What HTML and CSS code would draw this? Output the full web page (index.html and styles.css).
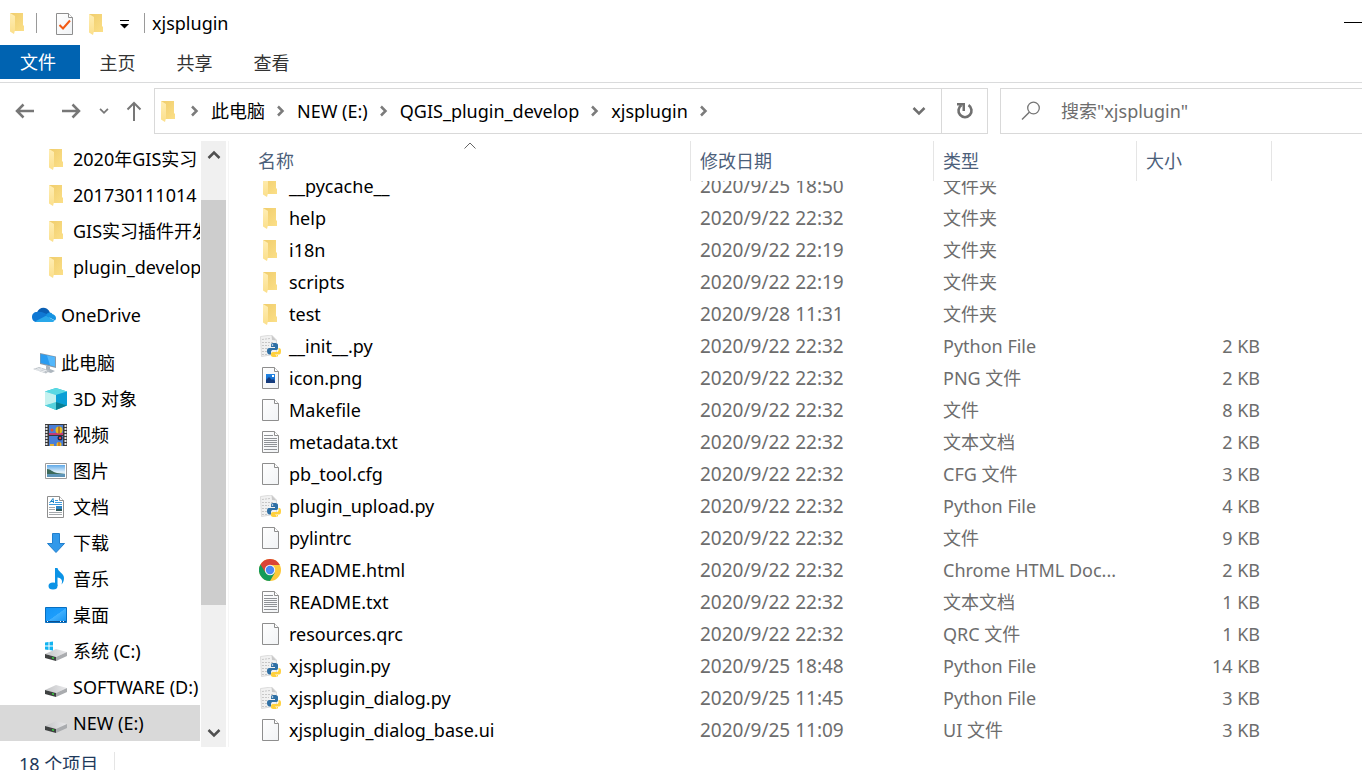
FILE: index.html
```html
<!DOCTYPE html>
<html lang="zh-CN">
<head>
<meta charset="utf-8">
<title>xjsplugin</title>
<link rel="stylesheet" href="styles.css">
</head>
<body>
<svg class="defs" aria-hidden="true">
  <defs>
    <linearGradient id="g-folder" x1="0" x2="1" y1="0" y2="1"><stop offset="0" stop-color="#f0cd6c"/><stop offset="1" stop-color="#fbdf88"/></linearGradient>
    <linearGradient id="g-flap" x1="0" x2="0" y1="0" y2="1"><stop offset="0" stop-color="#ffeeb5"/><stop offset="1" stop-color="#fbdf8b"/></linearGradient>
    <linearGradient id="g-page" x1="0" x2="1" y1="0" y2="1"><stop offset="0" stop-color="#ffffff"/><stop offset="1" stop-color="#f1f3f5"/></linearGradient>
    <linearGradient id="g-screen" x1="0" x2="1" y1="0" y2="1"><stop offset="0" stop-color="#1595f5"/><stop offset="0.5" stop-color="#1c9dfc"/><stop offset="0.52" stop-color="#3fb0ff"/><stop offset="1" stop-color="#1492f0"/></linearGradient>
    <linearGradient id="g-drive" x1="0" x2="1"><stop offset="0" stop-color="#c4c5c7"/><stop offset="1" stop-color="#e9e9eb"/></linearGradient>
    <linearGradient id="g-img" x1="0" x2="0" y1="0" y2="1"><stop offset="0" stop-color="#2486e4"/><stop offset="1" stop-color="#0d5fc0"/></linearGradient>
    <linearGradient id="g-sky" x1="0" x2="0" y1="0" y2="1"><stop offset="0" stop-color="#5fa9e8"/><stop offset="0.6" stop-color="#e6f3fb"/><stop offset="1" stop-color="#8bb9d6"/></linearGradient>
  </defs>
  <symbol id="i-folder" viewBox="0 0 22 22">
    <path d="M4 1h13v12l1 1v5H8z" fill="url(#g-folder)"/>
    <path d="M4 1l5 3v14l-1 4-4-2.500z" fill="url(#g-flap)"/>
  </symbol>
  <symbol id="i-page" viewBox="0 0 22 22">
    <path d="M3.500.500h12l4 4v17h-16z" fill="url(#g-page)" stroke="#8e8e8e"/>
    <path d="M15.500.500v4h4" fill="#fff" stroke="#8e8e8e"/>
  </symbol>
  <symbol id="i-text" viewBox="0 0 22 22">
    <use href="#i-page"/>
    <path d="M5 4.500h9M5 7.500h13M5 9.500h13M5 11.500h13M5 13.500h13M5 15.500h13M5 18.500h13" stroke="#8f9296"/>
  </symbol>
  <symbol id="i-png" viewBox="0 0 22 22">
    <use href="#i-page"/>
    <path d="M7 7h9v9H7z" fill="url(#g-img)"/>
    <path d="M7 16v-3l3-3 3 3 1-1 2 2v2z" fill="#153b7c"/>
    <path d="M13 8h2v2h-2z" fill="#fff"/>
  </symbol>
  <symbol id="i-check" viewBox="0 0 22 22">
    <use href="#i-page"/>
    <path d="M6.500 12l3.500 3.500 7-8" fill="none" stroke="#f25a13" stroke-width="2"/>
  </symbol>
  <symbol id="i-py" viewBox="0 0 22 22">
    <path d="M1.500 1.500l11-1.500 5 5v14l-15 2.500z" fill="#f1f1f1" stroke="#dcdcdc"/>
    <path d="M12.500 0l.5 5 4.500.500z" fill="#c9c9c9"/>
    <path d="M3 4.500l8-1M3 7.500h11M3 10.500h7M3 13.500h6M3 16.500h5M3 19.500h6" stroke="#c8c8c8" stroke-dasharray="2 1"/>
    <path d="M15 8c-3 0-3 1-3 2v2h4v1h-5.500C8.500 13 8 14 8 16s1 3.500 2.500 3.500H12V17c0-1.500 1-2 2-2h3.500c1 0 1.500-1 1.500-2v-3c0-1.500-1.500-2-4-2z" fill="#2f70a5"/>
    <path d="M19.500 13v2c0 1.500-1 2-2 2H14c-1.500 0-2 1-2 2v1.500c0 1 1.500 1.500 4 1.500 2 0 3-.5 3-1.500V20h-3v-.500h4c1.500 0 2-1 2-3.500 0-2-.5-3-2.500-3z" fill="#ffd13d"/>
    <circle cx="13.500" cy="10" r=".8" fill="#fff"/><circle cx="17.500" cy="20.800" r=".6" fill="#fff"/>
  </symbol>
  <symbol id="i-chrome" viewBox="0 0 22 22">
    <circle cx="11" cy="11" r="11" fill="#fdc93a"/>
    <path d="M11 11L1.470 5.500A11 11 0 0 0 11 22l4.800-8.200z" fill="#149b59"/>
    <path d="M11 11v-5h9.800A11 11 0 0 0 1.470 5.500L6.500 13.500z" fill="#db4437"/>
    <circle cx="11" cy="11" r="5.200" fill="#f4f4f4"/>
    <circle cx="11" cy="11" r="4.200" fill="#4a86f4"/>
  </symbol>
  <symbol id="i-cloud" viewBox="0 0 24 22">
    <path d="M5 8.500C7 3 14.500 1.500 18 8.500l-5 4z" fill="#0a5fb4"/>
    <path d="M5 8c-3 0-5 2-5 5s2 5 5 5h10l3-6C13 9 9 7 5 8z" fill="#0f78d4"/>
    <path d="M14 11c2-3.500 6-3 6.500-.5L17 14z" fill="#1490df"/>
    <path d="M3 17.500L14 11.800l8.500 4.700c-.5 1-1.500 1.500-3 1.500H5z" fill="#29a8ea"/>
    <path d="M14 11.500c1.500-2 3.500-2 5-1.500 3 0 5 2 5 4 0 1-.5 2-1 2.500z" fill="#1593e2"/>
  </symbol>
  <symbol id="i-pc" viewBox="0 0 24 22">
    <path d="M8 1l16 3.500v11.500L8 12z" fill="#8c99a5"/><path d="M8.500 2L23 5v9.500L8.500 11z" fill="#2b9cf0"/>
    <path d="M15 3.400L23 5v9.500l-5-1.200z" fill="#53b7fb"/>
    <path d="M14 13.500l4 1v2.500l5 2-4 2-5-1.500z" fill="#adb6be"/>
    <path d="M1 17l6-2 11 3.500-4 3z" fill="#bcc2c8"/><path d="M3 17l10 3M5 16l10 3M5 18.500l5-2M9 20l5-2" stroke="#eef0f2" stroke-width=".8"/>
  </symbol>
  <symbol id="i-cube" viewBox="0 0 22 22">
    <path d="M0 3.500L11 0l11 3.500v14L11 22 0 17.500z" fill="#27c0d3"/>
    <path d="M0 3.500L11 0l11 3.500L11 7z" fill="#5ad9e3"/><path d="M0 3.500L11 7v8L0 17.500z" fill="#c5f2f0"/>
    <path d="M11 7l11-3.500v14L11 14z" fill="#0b9fd6"/><path d="M0 17.500L11 14v8z" fill="#55d1dc"/><path d="M11 14l11 3.500L11 22z" fill="#087f95"/>
  </symbol>
  <symbol id="i-video" viewBox="0 0 22 22">
    <path d="M0 0h22v22H0z" fill="#39393b"/><path d="M4 1h14v10H4zM4 12h14v10H4z" fill="#4a7fd6"/>
    <path d="M1.500 1v21M20.500 1v21" stroke="#e3e3e3" stroke-width="2" stroke-dasharray="2 1"/>
    <path d="M4 9h6l3-1 5 1v2H4z" fill="#c43b73"/><circle cx="14" cy="6" r="3.500" fill="#e5b91f"/><path d="M14 2.500v7" stroke="#8e3b1c"/>
    <circle cx="7" cy="6" r="1.500" fill="#e05230"/><circle cx="15" cy="14" r="2.500" fill="#242748"/><path d="M14 13h2v2h-2z" fill="#df3e38"/>
    <circle cx="14" cy="20.500" r="2.500" fill="#edba24"/><path d="M14 18v4" stroke="#b84c23"/><path d="M5 20h4v2H5z" fill="#e4b136"/>
  </symbol>
  <symbol id="i-picture" viewBox="0 0 22 22">
    <path d="M.5 3.500h21v15H.5z" fill="#fff" stroke="#9b9b9b"/><path d="M2 5h18v12H2z" fill="url(#g-sky)"/>
    <path d="M2 9c4 0 5 3 10 4l8 1H2z" fill="#3c6a5b"/><path d="M2 14h18v3H2z" fill="#5e95b8"/>
  </symbol>
  <symbol id="i-doc" viewBox="0 0 22 22">
    <path d="M2.500.500h12l4 4v17h-16z" fill="#fff" stroke="#8e8e8e"/><path d="M14.500.500v4h4" fill="#fff" stroke="#8e8e8e"/>
    <path d="M4.500 7L8 2.500 8.500 7M6 5.500h3" fill="none" stroke="#1580c4"/><path d="M10 4.500h3M10 6.500h7M4 8.500h13" stroke="#3c9ade"/>
    <path d="M4 11.500h6M4 13.500h6M4 16.500h13M4 18.500h13" stroke="#a5a9ad"/><path d="M11 10h6v5h-6z" fill="#2f84c2"/><path d="M11 13h6v2h-6z" fill="#315a5b"/>
  </symbol>
  <symbol id="i-down" viewBox="0 0 22 22"><path d="M7.500 1.500h7v10h5L11 20.500 2.500 11.500h5z" fill="#3399ea" stroke="#2280ce"/></symbol>
  <symbol id="i-music" viewBox="0 0 22 22">
    <ellipse cx="8" cy="18" rx="4.500" ry="3.500" fill="#0b93e6"/>
    <path d="M10 0h2.500c.5 4 6.500 5 6.500 10 0 3-1 5-2.500 6.500 1.500-4 0-6.500-4-7V18H10z" fill="#0b93e6"/>
  </symbol>
  <symbol id="i-desktop" viewBox="0 0 22 22">
    <path d="M.5 3.500h21v15H.5z" fill="url(#g-screen)" stroke="#086fc0"/><path d="M1 17.500h20" stroke="#0c4f8e"/><path d="M2 17.500h1M15 17.500h1M18 17.500h1" stroke="#fff"/>
  </symbol>
  <symbol id="i-drive" viewBox="0 0 22 22">
    <path d="M0 14l11-5 11 3-11 5z" fill="url(#g-drive)"/><path d="M0 14l11 3v4L0 18z" fill="#3e4141"/><path d="M11 17L22 12v4l-11 5z" fill="#aaacaf"/>
    <path d="M7 17l2 .6v1.400l-2-.5z" fill="#37d13d"/>
  </symbol>
  <symbol id="i-sysdrive" viewBox="0 0 22 22">
    <use href="#i-drive"/>
    <path d="M0 2.500L3.500 2v3.500H0zM4.500 2L8 1.500v4H4.500zM0 6.500h3.500V10L0 9.500zM4.500 6.500H8v4L4.500 10z" fill="#12b3f0"/>
  </symbol>
  <symbol id="i-crumb" viewBox="0 0 8 12"><path d="M1 1.500L5.500 6 1 10.500" fill="none" stroke="#7b7b7b" stroke-width="2.500"/></symbol>
  <symbol id="i-chev" viewBox="0 0 14 10"><path d="M1.500 2L7 7.500 12.500 2" fill="none" stroke="currentColor" stroke-width="2.500"/></symbol>
</svg>

<div class="window">
  <header class="titlebar">
    <svg class="icon"><use href="#i-folder"/></svg>
    <span class="divider"></span>
    <button class="quick" aria-label="属性"><svg class="icon"><use href="#i-check"/></svg></button>
    <button class="quick" aria-label="新建文件夹"><svg class="icon"><use href="#i-folder"/></svg></button>
    <button class="quick narrow" aria-label="自定义快速访问工具栏"><svg width="9" height="10" viewBox="0 0 9 10"><path d="M0 1.500h9" stroke="#000" stroke-width="1"/><path d="M0 5h9L4.500 9.500z"/></svg></button>
    <span class="divider"></span>
    <h1 class="title">xjsplugin</h1>
    <button class="minimize" aria-label="最小化"></button>
  </header>

  <nav class="ribbon">
    <button class="tab active">文件</button>
    <button class="tab">主页</button>
    <button class="tab">共享</button>
    <button class="tab">查看</button>
  </nav>

  <div class="toolbar">
    <div class="history">
      <button class="arrow" aria-label="后退"><svg width="20" height="16" viewBox="0 0 20 16"><path d="M19 8H2M8.500 1.500L2 8l6.500 6.500" fill="none" stroke="#777" stroke-width="2.500"/></svg></button>
      <button class="arrow" aria-label="前进"><svg width="20" height="16" viewBox="0 0 20 16"><path d="M1 8h17M11.500 1.500L18 8l-6.500 6.500" fill="none" stroke="#777" stroke-width="2.500"/></svg></button>
      <button class="arrow recent" aria-label="最近位置"><svg width="10" height="8" viewBox="0 0 14 10"><use href="#i-chev"/></svg></button>
      <button class="arrow up" aria-label="上移"><svg width="16" height="20" viewBox="0 0 16 20"><path d="M8 20V2M1.500 8.500L8 2l6.500 6.500" fill="none" stroke="#777" stroke-width="2"/></svg></button>
    </div>
    <div class="address">
      <svg class="icon"><use href="#i-folder"/></svg>
      <div class="crumbs">
        <svg class="sep"><use href="#i-crumb"/></svg><a href="#">此电脑</a>
        <svg class="sep"><use href="#i-crumb"/></svg><a href="#">NEW (E:)</a>
        <svg class="sep"><use href="#i-crumb"/></svg><a href="#">QGIS_plugin_develop</a>
        <svg class="sep"><use href="#i-crumb"/></svg><a href="#">xjsplugin</a>
        <svg class="sep"><use href="#i-crumb"/></svg>
      </div>
      <button class="drop" aria-label="上一个位置"><svg width="14" height="10"><use href="#i-chev"/></svg></button>
      <button class="refresh" aria-label="刷新"><svg width="18" height="18" viewBox="0 0 18 18"><path d="M12.500 3.200a6.500 6.500 0 1 1-7 0" fill="none" stroke="#707070" stroke-width="2.600"/><path d="M1 1h8v8H6.500V3.500H1z" fill="#707070"/></svg></button>
    </div>
    <label class="search">
      <svg width="20" height="20" viewBox="0 0 20 20"><circle cx="12.500" cy="7" r="5.800" fill="none" stroke="#757575" stroke-width="1.300"/><path d="M8.300 11.300L1 18.500" stroke="#757575" stroke-width="1.500"/></svg>
      <input type="text" aria-label="搜索" placeholder="搜索&quot;xjsplugin&quot;">
    </label>
  </div>

  <main class="content">
    <nav class="tree">
      <a href="#"><svg class="icon"><use href="#i-folder"/></svg>2020年GIS实习</a>
      <a href="#"><svg class="icon"><use href="#i-folder"/></svg>201730111014</a>
      <a href="#"><svg class="icon"><use href="#i-folder"/></svg>GIS实习插件开发</a>
      <a href="#"><svg class="icon"><use href="#i-folder"/></svg>plugin_develop</a>
      <a href="#" class="root"><svg class="icon wide"><use href="#i-cloud"/></svg>OneDrive</a>
      <a href="#" class="root"><svg class="icon wide"><use href="#i-pc"/></svg>此电脑</a>
      <a href="#"><svg class="icon"><use href="#i-cube"/></svg>3D 对象</a>
      <a href="#"><svg class="icon"><use href="#i-video"/></svg>视频</a>
      <a href="#"><svg class="icon"><use href="#i-picture"/></svg>图片</a>
      <a href="#"><svg class="icon"><use href="#i-doc"/></svg>文档</a>
      <a href="#"><svg class="icon"><use href="#i-down"/></svg>下载</a>
      <a href="#"><svg class="icon"><use href="#i-music"/></svg>音乐</a>
      <a href="#"><svg class="icon"><use href="#i-desktop"/></svg>桌面</a>
      <a href="#"><svg class="icon"><use href="#i-sysdrive"/></svg>系统 (C:)</a>
      <a href="#"><svg class="icon"><use href="#i-drive"/></svg>SOFTWARE (D:)</a>
      <a href="#" class="selected"><svg class="icon"><use href="#i-drive"/></svg>NEW (E:)</a>
    </nav>
    <div class="scrollbar">
      <button aria-label="向上滚动"><svg width="14" height="10" viewBox="0 0 14 10"><path d="M1.500 8L7 2.500 12.500 8" fill="none" stroke="#505050" stroke-width="2.500"/></svg></button>
      <div class="track"><div class="thumb"></div></div>
      <button aria-label="向下滚动"><svg width="14" height="10"><use href="#i-chev"/></svg></button>
    </div>
    <section class="files">
      <table>
        <thead>
          <tr>
            <th>名称<svg class="sort" width="12" height="7" viewBox="0 0 12 7"><path d="M.5 6.500L6 1l5.500 5.500" fill="none" stroke="#666"/></svg></th>
            <th>修改日期</th><th>类型</th><th>大小</th>
          </tr>
        </thead>
        <tbody>
          <tr><td><svg class="icon"><use href="#i-folder"/></svg>__pycache__</td><td>2020/9/25 18:50</td><td>文件夹</td><td></td></tr>
          <tr><td><svg class="icon"><use href="#i-folder"/></svg>help</td><td>2020/9/22 22:32</td><td>文件夹</td><td></td></tr>
          <tr><td><svg class="icon"><use href="#i-folder"/></svg>i18n</td><td>2020/9/22 22:19</td><td>文件夹</td><td></td></tr>
          <tr><td><svg class="icon"><use href="#i-folder"/></svg>scripts</td><td>2020/9/22 22:19</td><td>文件夹</td><td></td></tr>
          <tr><td><svg class="icon"><use href="#i-folder"/></svg>test</td><td>2020/9/28 11:31</td><td>文件夹</td><td></td></tr>
          <tr><td><svg class="icon"><use href="#i-py"/></svg>__init__.py</td><td>2020/9/22 22:32</td><td>Python File</td><td>2 KB</td></tr>
          <tr><td><svg class="icon"><use href="#i-png"/></svg>icon.png</td><td>2020/9/22 22:32</td><td>PNG 文件</td><td>2 KB</td></tr>
          <tr><td><svg class="icon"><use href="#i-page"/></svg>Makefile</td><td>2020/9/22 22:32</td><td>文件</td><td>8 KB</td></tr>
          <tr><td><svg class="icon"><use href="#i-text"/></svg>metadata.txt</td><td>2020/9/22 22:32</td><td>文本文档</td><td>2 KB</td></tr>
          <tr><td><svg class="icon"><use href="#i-page"/></svg>pb_tool.cfg</td><td>2020/9/22 22:32</td><td>CFG 文件</td><td>3 KB</td></tr>
          <tr><td><svg class="icon"><use href="#i-py"/></svg>plugin_upload.py</td><td>2020/9/22 22:32</td><td>Python File</td><td>4 KB</td></tr>
          <tr><td><svg class="icon"><use href="#i-page"/></svg>pylintrc</td><td>2020/9/22 22:32</td><td>文件</td><td>9 KB</td></tr>
          <tr><td><svg class="icon"><use href="#i-chrome"/></svg>README.html</td><td>2020/9/22 22:32</td><td>Chrome HTML Doc...</td><td>2 KB</td></tr>
          <tr><td><svg class="icon"><use href="#i-text"/></svg>README.txt</td><td>2020/9/22 22:32</td><td>文本文档</td><td>1 KB</td></tr>
          <tr><td><svg class="icon"><use href="#i-page"/></svg>resources.qrc</td><td>2020/9/22 22:32</td><td>QRC 文件</td><td>1 KB</td></tr>
          <tr><td><svg class="icon"><use href="#i-py"/></svg>xjsplugin.py</td><td>2020/9/25 18:48</td><td>Python File</td><td>14 KB</td></tr>
          <tr><td><svg class="icon"><use href="#i-py"/></svg>xjsplugin_dialog.py</td><td>2020/9/25 11:45</td><td>Python File</td><td>3 KB</td></tr>
          <tr><td><svg class="icon"><use href="#i-page"/></svg>xjsplugin_dialog_base.ui</td><td>2020/9/25 11:09</td><td>UI 文件</td><td>3 KB</td></tr>
        </tbody>
      </table>
    </section>
  </main>

  <footer class="status"><span>18 个项目</span></footer>
</div>
</body>
</html>
```

FILE: styles.css
```css
* { box-sizing: border-box; }

body {
  margin: 0;
  background: #fff;
  color: #000;
  font: 18px/24px "Noto Sans", "Noto Sans CJK SC", sans-serif;
}

button {
  display: flex;
  align-items: center;
  justify-content: center;
  padding: 0;
  border: 0;
  background: none;
  color: inherit;
  font: inherit;
}

a { color: inherit; text-decoration: none; }
svg { flex: none; }
.defs { position: absolute; width: 0; height: 0; }
.icon { width: 22px; height: 22px; }

.window {
  display: flex;
  flex-direction: column;
  height: 100vh;
  overflow: hidden;
}

/* Title bar */
.titlebar {
  display: flex;
  align-items: center;
  flex: none;
  height: 45px;
  padding-left: 6px;
}
.divider { width: 1px; height: 20px; margin-left: 8px; background: #9a9a9a; }
.quick { width: 32px; height: 32px; margin-top: 3px; }
.divider + .quick { margin-left: 11px; }
.quick.narrow { width: 24px; }
.title { margin: 0 auto 0 7px; font-size: 18px; font-weight: 400; }
.minimize { width: 18px; height: 1px; background: #000; }

/* Ribbon */
.ribbon {
  display: flex;
  flex: none;
  height: 38px;
  border-bottom: 1px solid #dadbdc;
}
.tab { width: 77px; height: 34px; padding: 2px 2px 0 0; color: #333; }
.tab.active { width: 80px; padding: 0 4px 0 0; background: #0063b1; color: #fff; }

/* Navigation and address */
.toolbar { display: flex; flex: none; padding: 5px 0 7px; }
.history { display: flex; align-items: center; width: 154px; padding-left: 2px; color: #777; }
.arrow { width: 46px; height: 40px; }
.arrow.recent { width: 20px; }
.arrow.up { width: 40px; }
.address {
  display: flex;
  align-items: center;
  flex: 1;
  height: 46px;
  border: 1px solid #d9d9d9;
  padding-left: 2px;
}
.crumbs { display: flex; align-items: center; flex: 1; gap: 12px; padding-left: 12px; }
.sep { width: 8px; height: 12px; }
.drop { width: 44px; color: #6f6f6f; }
.refresh { width: 46px; height: 44px; border-left: 1px solid #d9d9d9; }
.search {
  display: flex;
  align-items: center;
  gap: 20px;
  width: 362px;
  height: 46px;
  margin-left: 12px;
  padding-left: 20px;
  border: 1px solid #d9d9d9;
  border-right: 0;
}
.search input { flex: 1; min-width: 0; border: 0; padding: 0; outline: 0; font: inherit; }
.search input::placeholder { color: #6d6d6d; }

/* Folder tree */
.content { display: flex; flex: 1; min-height: 0; }
.tree { width: 200px; overflow: hidden; }
.tree a {
  display: flex;
  align-items: center;
  gap: 6px;
  height: 36px;
  padding-left: 45px;
  white-space: nowrap;
}
.tree .root { gap: 5px; margin: 12px 0; padding-left: 32px; }
.tree .root + .root { margin: 0; }
.icon.wide { width: 24px; }
.tree .selected { background: #d9d9d9; }

.scrollbar {
  display: flex;
  flex-direction: column;
  width: 25px;
  margin-left: 1px;
  background: #f0f0f0;
  color: #505050;
}
.scrollbar button { height: 28px; }
.track { flex: 1; padding-top: 31px; }
.thumb { height: 78%; background: #cdcdcd; }

/* File list */
.files { flex: 1; margin-left: 2px; border-left: 1px solid #f5f5f5; overflow: hidden; }
.files table, .files tbody { display: block; }
.files thead { display: block; position: relative; z-index: 1; background: #fff; }
.files tr {
  display: grid;
  grid-template-columns: minmax(0, 462px) 243px 203px 135px;
}
.files th {
  position: relative;
  height: 40px;
  padding: 8px 9px;
  border-right: 1px solid #e5e5e5;
  color: #4c607a;
  font-weight: 400;
  text-align: left;
}
.files th:first-child { padding-left: 29px; }
.sort { position: absolute; top: 1px; left: 51%; }
.files tbody { margin-top: -11px; color: #6d6d6d; }
.files td { height: 32px; padding: 4px 9px; white-space: nowrap; }
.files td:first-child {
  display: flex;
  align-items: center;
  gap: 8px;
  padding: 0 0 0 30px;
  color: #000;
}
.files td:nth-child(2) { font-size: 19px; }
.files td:last-child { padding-right: 12px; text-align: right; }

/* Status bar */
.status { flex: none; height: 23px; padding: 5px 0 0 19px; overflow: hidden; color: #1e395b; }
.status span { display: inline-block; padding-right: 16px; border-right: 1px solid #e5e5e5; }
```
